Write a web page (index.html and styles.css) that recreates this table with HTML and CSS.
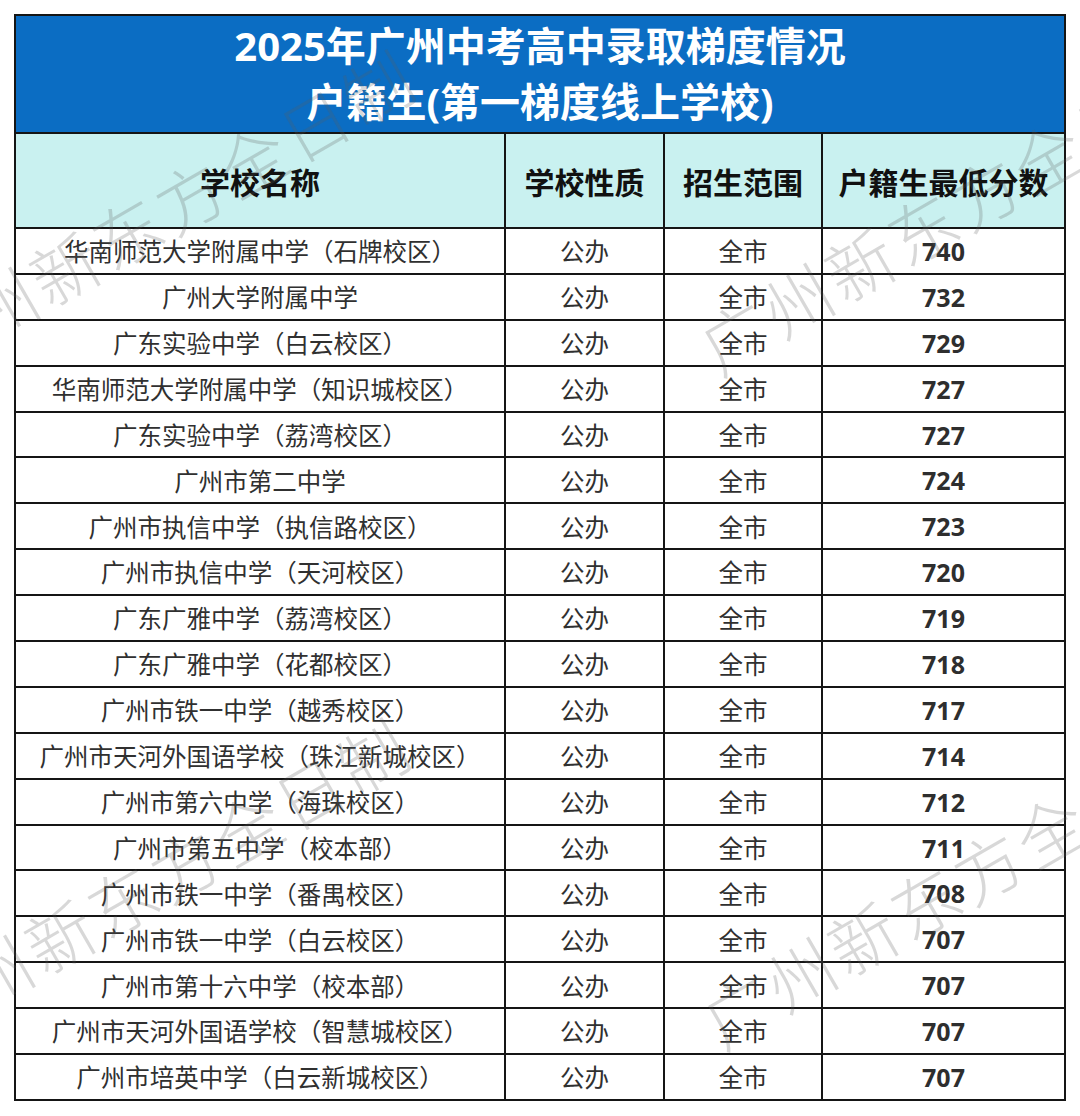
FILE: index.html
```html
<!DOCTYPE html>
<html lang="zh-CN">
<head>
<meta charset="utf-8">
<title>2025年广州中考高中录取梯度情况</title>
<link rel="stylesheet" href="styles.css">
</head>
<body>
<div class="page">
  <table class="score-table">
    <colgroup>
      <col class="c-name">
      <col class="c-type">
      <col class="c-range">
      <col class="c-score">
    </colgroup>
    <thead>
      <tr class="title-row">
        <th colspan="4">2025年广州中考高中录取梯度情况<br>户籍生(第一梯度线上学校)</th>
      </tr>
      <tr class="head-row">
        <th>学校名称</th>
        <th>学校性质</th>
        <th>招生范围</th>
        <th>户籍生最低分数</th>
      </tr>
    </thead>
    <tbody>
      <tr><td>华南师范大学附属中学（石牌校区）</td><td>公办</td><td>全市</td><td class="num">740</td></tr>
      <tr><td>广州大学附属中学</td><td>公办</td><td>全市</td><td class="num">732</td></tr>
      <tr><td>广东实验中学（白云校区）</td><td>公办</td><td>全市</td><td class="num">729</td></tr>
      <tr><td>华南师范大学附属中学（知识城校区）</td><td>公办</td><td>全市</td><td class="num">727</td></tr>
      <tr><td>广东实验中学（荔湾校区）</td><td>公办</td><td>全市</td><td class="num">727</td></tr>
      <tr><td>广州市第二中学</td><td>公办</td><td>全市</td><td class="num">724</td></tr>
      <tr><td>广州市执信中学（执信路校区）</td><td>公办</td><td>全市</td><td class="num">723</td></tr>
      <tr><td>广州市执信中学（天河校区）</td><td>公办</td><td>全市</td><td class="num">720</td></tr>
      <tr><td>广东广雅中学（荔湾校区）</td><td>公办</td><td>全市</td><td class="num">719</td></tr>
      <tr><td>广东广雅中学（花都校区）</td><td>公办</td><td>全市</td><td class="num">718</td></tr>
      <tr><td>广州市铁一中学（越秀校区）</td><td>公办</td><td>全市</td><td class="num">717</td></tr>
      <tr><td>广州市天河外国语学校（珠江新城校区）</td><td>公办</td><td>全市</td><td class="num">714</td></tr>
      <tr><td>广州市第六中学（海珠校区）</td><td>公办</td><td>全市</td><td class="num">712</td></tr>
      <tr><td>广州市第五中学（校本部）</td><td>公办</td><td>全市</td><td class="num">711</td></tr>
      <tr><td>广州市铁一中学（番禺校区）</td><td>公办</td><td>全市</td><td class="num">708</td></tr>
      <tr><td>广州市铁一中学（白云校区）</td><td>公办</td><td>全市</td><td class="num">707</td></tr>
      <tr><td>广州市第十六中学（校本部）</td><td>公办</td><td>全市</td><td class="num">707</td></tr>
      <tr><td>广州市天河外国语学校（智慧城校区）</td><td>公办</td><td>全市</td><td class="num">707</td></tr>
      <tr><td>广州市培英中学（白云新城校区）</td><td>公办</td><td>全市</td><td class="num">707</td></tr>
    </tbody>
  </table>
  <div class="watermarks" aria-hidden="true">
    <span class="wm wm-tl">广州新东方全日制</span>
    <span class="wm wm-tr">广州新东方全日制</span>
    <span class="wm wm-bl">广州新东方全日制</span>
    <span class="wm wm-br">广州新东方全日制</span>
  </div>
</div>
</body>
</html>
```

FILE: styles.css
```css
html, body {
  margin: 0;
  padding: 0;
  background: #ffffff;
}

body {
  width: 1080px;
  height: 1116px;
  overflow: hidden;
  font-family: "Open Sans", "Noto Sans CJK SC", sans-serif;
}

.page {
  position: relative;
  width: 1080px;
  height: 1116px;
  padding: 14px 0 0 14px;
  box-sizing: border-box;
}

.score-table {
  width: 1050px;
  table-layout: fixed;
  border-collapse: collapse;
  border: 2px solid #151515;
}

.c-name { width: 490px; }
.c-type { width: 159px; }
.c-range { width: 158px; }
.c-score { width: 243px; }

.score-table th,
.score-table td {
  border: 2px solid #151515;
  padding: 0;
  text-align: center;
  vertical-align: middle;
}

.title-row th {
  height: 116px;
  background: #0b6dc3;
  color: #ffffff;
  font-size: 40px;
  font-weight: 700;
  line-height: 56px;
  letter-spacing: 0;
}

.head-row th {
  height: 93px;
  background: #c9f1f0;
  color: #111111;
  font-family: "Noto Sans CJK SC", sans-serif;
  font-size: 30px;
  font-weight: 700;
}

.score-table td {
  height: 43.9px;
  color: #303030;
  font-family: "Noto Sans CJK SC", sans-serif;
  font-size: 24.5px;
  font-weight: 400;
  line-height: 1.2;
}

.score-table td.num {
  font-family: "Open Sans", "Noto Sans CJK SC", sans-serif;
  font-weight: 700;
  font-size: 25px;
  color: #2e2e2e;
}

.watermarks {
  position: absolute;
  inset: 0;
  overflow: hidden;
  pointer-events: none;
}

.wm {
  position: absolute;
  white-space: nowrap;
  font-family: "Noto Sans CJK SC", sans-serif;
  font-weight: 300;
  font-size: 68px;
  line-height: 1;
  letter-spacing: 4px;
  color: rgba(90, 90, 90, 0.24);
  transform-origin: 0 50%;
  transform: rotate(-30deg);
}

.wm-tl { left: -90px; top: 322px; }
.wm-tr { left: 705px; top: 318px; }
.wm-bl { left: -95px; top: 990px; }
.wm-br { left: 708px; top: 992px; }
```
